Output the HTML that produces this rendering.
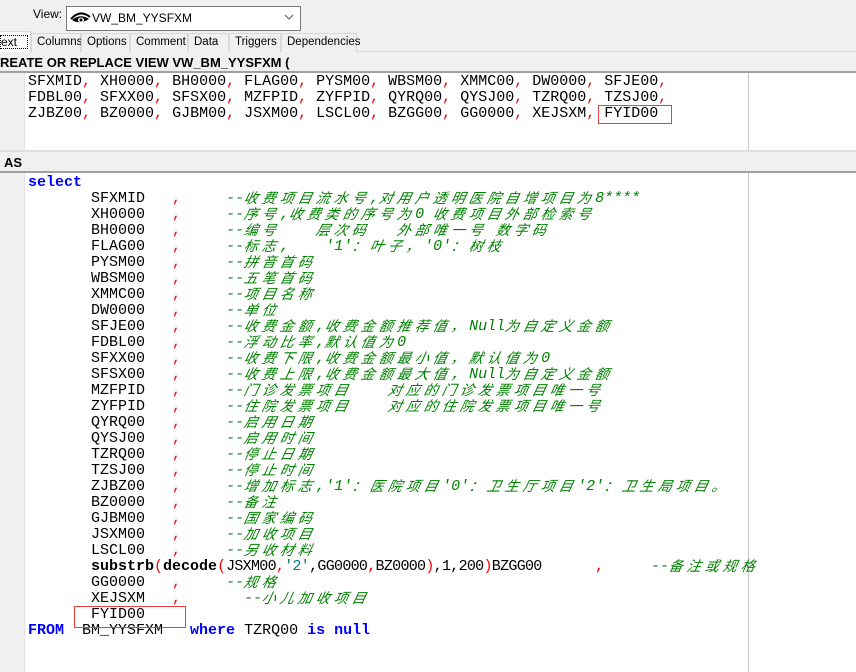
<!DOCTYPE html>
<html><head><meta charset="utf-8"><style>
*{margin:0;padding:0;box-sizing:border-box}
body{width:856px;height:672px;overflow:hidden;background:#f0f0f0;position:relative;font-family:"Liberation Sans",sans-serif;}
.abs{position:absolute}
.tab{position:absolute;top:33px;height:19px;border:1px solid #d9d9d9;border-bottom:none;background:#f0f0f0;font-size:11.5px;line-height:17px;padding-left:5px;color:#000}
.ed{position:absolute;background:#fff}
.gut{position:absolute;left:0;width:25px;background:#f0f0f0;border-right:1px solid #e3e3e3}
.code{position:absolute;left:28px;font-family:"Liberation Mono",monospace;font-size:15px;line-height:16px;white-space:pre;color:#000}
.r{color:#f00}
.g{color:#008000;font-style:italic}
.k{color:#0000ff;font-weight:bold}
.b{font-weight:bold}
.t{color:#008080}
.c{display:inline-block;width:18px;height:16px;vertical-align:top;font-family:"Noto Sans CJK SC",sans-serif;font-size:14px;line-height:14px;font-style:italic;transform:skewX(-12deg)}
</style></head><body>
<div class="abs" style="left:33px;top:7px;font-size:12px">View:</div>
<div class="abs" style="left:66px;top:6px;width:235px;height:25px;background:#fff;border:1px solid #7a7a7a"></div>
<svg class="abs" style="left:70px;top:10px" width="22" height="16" viewBox="0 0 22 16"><path d="M1 9 Q10 -1 20 7" stroke="#000" stroke-width="2" fill="none"/><path d="M2 10 Q10 3 19 9 Q10 15 2 10Z" fill="#000"/><ellipse cx="11" cy="10" rx="3" ry="2.5" fill="#fff"/><circle cx="11" cy="10" r="1.5" fill="#000"/></svg>
<div class="abs" style="left:92px;top:11px;font-size:12px">VW_BM_YYSFXM</div>
<svg class="abs" style="left:284px;top:14px" width="10" height="6"><path d="M1 1 L5 5 L9 1" stroke="#555" fill="none"/></svg>
<div class="abs" style="left:0;top:51px;width:856px;height:1px;background:#d9d9d9"></div>
<div class="abs" style="left:0;top:31px;width:31px;height:21px;background:#fff;border:1px solid #d9d9d9;border-left:none;border-bottom:none"><div style="margin:3px 2px 0 0;border:1px dotted #000;height:14px;font-size:12px;line-height:12px;padding-left:0">ext</div></div>
<div class="tab" style="left:31px;width:50px">Columns</div>
<div class="tab" style="left:81px;width:49px">Options</div>
<div class="tab" style="left:130px;width:58px">Comment</div>
<div class="tab" style="left:188px;width:41px">Data</div>
<div class="tab" style="left:229px;width:52px">Triggers</div>
<div class="tab" style="left:281px;width:76px">Dependencies</div>
<div class="abs b" style="left:0;top:55px;font-size:13px;line-height:15px">REATE OR REPLACE VIEW VW_BM_YYSFXM (</div>
<div class="abs" style="left:0;top:71px;width:856px;height:2px;background:#a0a0a0"></div>
<div class="ed" style="left:0;top:73px;width:856px;height:77px"></div>
<div class="gut" style="top:73px;height:77px"></div>
<div class="abs" style="left:748px;top:73px;width:1px;height:77px;background:#c8c8c8"></div>
<div class="code" style="top:74px">SFXMID<span class="r">,</span> XH0000<span class="r">,</span> BH0000<span class="r">,</span> FLAG00<span class="r">,</span> PYSM00<span class="r">,</span> WBSM00<span class="r">,</span> XMMC00<span class="r">,</span> DW0000<span class="r">,</span> SFJE00<span class="r">,</span>
FDBL00<span class="r">,</span> SFXX00<span class="r">,</span> SFSX00<span class="r">,</span> MZFPID<span class="r">,</span> ZYFPID<span class="r">,</span> QYRQ00<span class="r">,</span> QYSJ00<span class="r">,</span> TZRQ00<span class="r">,</span> TZSJ00<span class="r">,</span>
ZJBZ00<span class="r">,</span> BZ0000<span class="r">,</span> GJBM00<span class="r">,</span> JSXM00<span class="r">,</span> LSCL00<span class="r">,</span> BZGG00<span class="r">,</span> GG0000<span class="r">,</span> XEJSXM<span class="r">,</span> FYID00</div>
<div class="abs" style="left:598px;top:105px;width:74px;height:19px;border:1px solid #e84040"></div>
<div class="abs" style="left:0;top:150px;width:856px;height:2px;background:#e0e0e0"></div>
<div class="abs b" style="left:4px;top:155px;font-size:13px;line-height:15px">AS</div>
<div class="abs" style="left:0;top:171px;width:856px;height:2px;background:#a0a0a0"></div>
<div class="ed" style="left:0;top:173px;width:856px;height:499px"></div>
<div class="gut" style="top:173px;height:499px"></div>
<div class="abs" style="left:748px;top:173px;width:1px;height:499px;background:#c8c8c8"></div>
<div class="code" id="body" style="top:175px"><span class="k">select</span>
       SFXMID   <span class="r">,</span>     <span class="g">--收费项目流水号,对用户透明医院自增项目为8****</span>
       XH0000   <span class="r">,</span>     <span class="g">--序号,收费类的序号为0 收费项目外部检索号</span>
       BH0000   <span class="r">,</span>     <span class="g">--编号    层次码   外部唯一号 数字码</span>
       FLAG00   <span class="r">,</span>     <span class="g">--标志,    '1'：叶子，'0'：树枝</span>
       PYSM00   <span class="r">,</span>     <span class="g">--拼音首码</span>
       WBSM00   <span class="r">,</span>     <span class="g">--五笔首码</span>
       XMMC00   <span class="r">,</span>     <span class="g">--项目名称</span>
       DW0000   <span class="r">,</span>     <span class="g">--单位</span>
       SFJE00   <span class="r">,</span>     <span class="g">--收费金额,收费金额推荐值，Null为自定义金额</span>
       FDBL00   <span class="r">,</span>     <span class="g">--浮动比率,默认值为0</span>
       SFXX00   <span class="r">,</span>     <span class="g">--收费下限,收费金额最小值，默认值为0</span>
       SFSX00   <span class="r">,</span>     <span class="g">--收费上限,收费金额最大值，Null为自定义金额</span>
       MZFPID   <span class="r">,</span>     <span class="g">--门诊发票项目    对应的门诊发票项目唯一号</span>
       ZYFPID   <span class="r">,</span>     <span class="g">--住院发票项目    对应的住院发票项目唯一号</span>
       QYRQ00   <span class="r">,</span>     <span class="g">--启用日期</span>
       QYSJ00   <span class="r">,</span>     <span class="g">--启用时间</span>
       TZRQ00   <span class="r">,</span>     <span class="g">--停止日期</span>
       TZSJ00   <span class="r">,</span>     <span class="g">--停止时间</span>
       ZJBZ00   <span class="r">,</span>     <span class="g">--增加标志,'1'：医院项目'0'：卫生厅项目'2'：卫生局项目。</span>
       BZ0000   <span class="r">,</span>     <span class="g">--备注</span>
       GJBM00   <span class="r">,</span>     <span class="g">--国家编码</span>
       JSXM00   <span class="r">,</span>     <span class="g">--加收项目</span>
       LSCL00   <span class="r">,</span>     <span class="g">--另收材料</span>
       <span class="b">substrb</span><span class="r">(</span><span class="b">decode</span><span class="r">(</span><span style="letter-spacing:-0.7px">JSXM00<span class="r">,</span><span class="t">'2'</span>,GG0000<span class="r">,</span>BZ0000<span class="r">)</span>,1,200<span class="r">)</span>BZGG00</span>
       GG0000   <span class="r">,</span>     <span class="g">--规格</span>
       XEJSXM   <span class="r">,</span>       <span class="g">--小儿加收项目</span>
       FYID00
<span class="k">FROM</span>  BM_YYSFXM   <span class="k">where</span> TZRQ00 <span class="k">is</span> <span class="k">null</span></div>
<div class="code abs" style="left:595px;top:559px"><span class="r">,</span></div>
<div class="code abs" id="c2" style="left:651px;top:559px"><span class="g">--备注或规格</span></div>
<div class="abs" style="left:74px;top:606px;width:112px;height:22px;border:1px solid #e84040"></div>
<script>
function wrap(el){
  el.querySelectorAll('.g').forEach(function(s){
    s.innerHTML=s.textContent.replace(/([\u3000-\u303f\u4e00-\u9fff\uff00-\uffef])/g,'<span class="c">$1</span>');
  });
}
wrap(document.getElementById('body'));wrap(document.getElementById('c2'));
</script>
</body></html>
